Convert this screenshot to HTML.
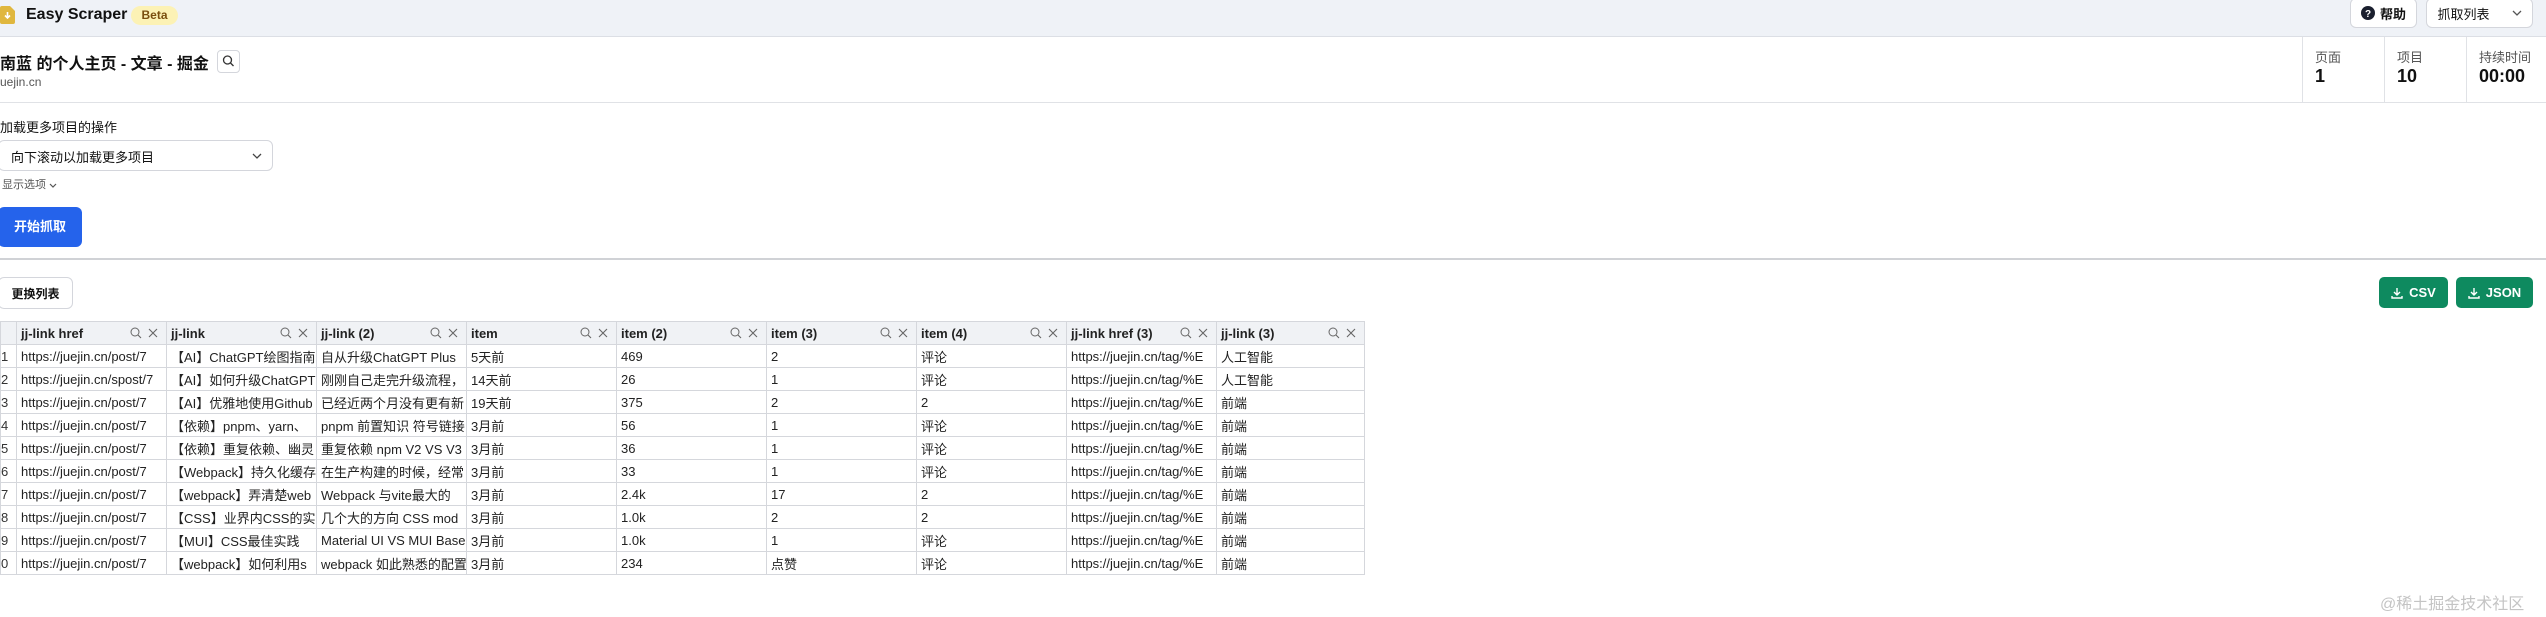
<!DOCTYPE html>
<html><head><meta charset="utf-8"><style>
*{box-sizing:border-box;margin:0;padding:0}
body{width:2546px;height:617px;background:#fff;font-family:"Liberation Sans","Noto Sans CJK SC",sans-serif;color:#111;position:relative;overflow:hidden}
.abs{position:absolute}
.hdr{left:0;top:0;width:2546px;height:37px;background:#eff2f7;border-bottom:1px solid #dcdfe5}
.btn{position:absolute;border:1px solid #d4d6dc;border-radius:6px;background:#fff;font-size:13px;display:flex;align-items:center;justify-content:center}
table{position:absolute;left:0;top:321px;width:1364px;border-collapse:collapse;font-size:13px;table-layout:fixed}
td,th{border:1px solid #d5d7dc;height:23px;padding:0 4px;white-space:nowrap;overflow:hidden;text-align:left;font-weight:normal;color:#222}
th{background:#f0f2f5;font-weight:bold;position:relative;padding-right:40px}
th svg{position:absolute;right:6px;top:5px}
td.i{padding:0;color:#333}
.g{background:#0e8a5f;color:#fff;border-radius:5px;font-weight:bold;font-size:13px;display:flex;align-items:center;justify-content:center;gap:6px}
</style></head><body>
<div class="abs hdr"></div>
<svg class="abs" style="left:0;top:6px" width="15" height="18"><path d="M0 2Q0 0 2 0H10L15 5V16Q15 18 13 18H2Q0 18 0 16Z" fill="#e0b73e"/><path d="M7.5 6V12M5 9.5L7.5 12L10 9.5" stroke="#fff" stroke-width="1.6" fill="none"/></svg>
<div class="abs" style="left:26px;top:6px;font-size:16px;font-weight:bold">Easy Scraper</div>
<div class="abs" style="left:131px;top:6px;width:47px;height:19px;border-radius:10px;background:#fcf2b5;color:#7a4f0f;font-size:12px;font-weight:bold;text-align:center;line-height:19px">Beta</div>
<div class="btn" style="left:2350px;top:-2px;width:67px;height:30px;gap:5px;font-weight:bold"><svg width="14" height="14"><circle cx="7" cy="7" r="7" fill="#1a1f2e"/><text x="7" y="11" font-size="10" font-weight="bold" fill="#fff" text-anchor="middle" font-family="Liberation Sans">?</text></svg>帮助</div>
<div class="btn" style="left:2426px;top:-2px;width:107px;height:30px;gap:22px">抓取列表<svg width="10" height="6"><path d="M1 1L5 5L9 1" stroke="#555" stroke-width="1.3" fill="none"/></svg></div>

<div class="abs" style="left:0;top:50px;font-size:16px;font-weight:bold">南蓝 的个人主页 - 文章 - 掘金</div>
<div class="abs" style="left:217px;top:50px;width:23px;height:23px;border:1px solid #d4d6dc;border-radius:4px"><svg width="21" height="21"><circle cx="9.5" cy="9" r="4" stroke="#333" stroke-width="1.3" fill="none"/><path d="M12.5 12L15.5 15" stroke="#333" stroke-width="1.3"/></svg></div>
<div class="abs" style="left:0;top:75px;font-size:12px;color:#555">uejin.cn</div>
<div class="abs" style="left:0;top:102px;width:2546px;border-top:1px solid #e0e2e6"></div>
<div class="abs" style="left:2302px;top:37px;height:65px;border-left:1px solid #e0e2e6"></div>
<div class="abs" style="left:2384px;top:37px;height:65px;border-left:1px solid #e0e2e6"></div>
<div class="abs" style="left:2466px;top:37px;height:65px;border-left:1px solid #e0e2e6"></div>
<div class="abs" style="left:2315px;top:47px;font-size:13px;color:#555">页面</div>
<div class="abs" style="left:2315px;top:66px;font-size:18px;font-weight:bold">1</div>
<div class="abs" style="left:2397px;top:47px;font-size:13px;color:#555">项目</div>
<div class="abs" style="left:2397px;top:66px;font-size:18px;font-weight:bold">10</div>
<div class="abs" style="left:2479px;top:47px;font-size:13px;color:#555">持续时间</div>
<div class="abs" style="left:2479px;top:66px;font-size:18px;font-weight:bold">00:00</div>

<div class="abs" style="left:0;top:117px;font-size:13px">加载更多项目的操作</div>
<div class="abs" style="left:-2px;top:140px;width:275px;height:31px;border:1px solid #d4d6dc;border-radius:6px;font-size:13px;padding:6px 0 0 12px">向下滚动以加载更多项目<svg style="position:absolute;right:10px;top:12px" width="10" height="6"><path d="M1 1L5 5L9 1" stroke="#444" stroke-width="1.3" fill="none"/></svg></div>
<div class="abs" style="left:2px;top:176px;font-size:11px;color:#555">显示选项 <svg width="8" height="5"><path d="M1 1L4 4L7 1" stroke="#555" stroke-width="1.2" fill="none"/></svg></div>
<div class="abs" style="left:-2px;top:207px;width:84px;height:40px;background:#2563eb;border-radius:6px;color:#fff;font-weight:bold;font-size:13px;text-align:center;line-height:40px">开始抓取</div>
<div class="abs" style="left:0;top:258px;width:2546px;border-top:2px solid #d0d2d6"></div>

<div class="btn" style="left:-2px;top:277px;width:75px;height:32px;font-weight:bold;font-size:12px">更换列表</div>
<div class="abs g" style="left:2379px;top:277px;width:69px;height:31px"><svg width="12" height="12"><path d="M6 1V8M3 5L6 8L9 5M1 9V11H11V9" stroke="#fff" stroke-width="1.4" fill="none"/></svg>CSV</div>
<div class="abs g" style="left:2456px;top:277px;width:77px;height:31px"><svg width="12" height="12"><path d="M6 1V8M3 5L6 8L9 5M1 9V11H11V9" stroke="#fff" stroke-width="1.4" fill="none"/></svg>JSON</div>

<table>
<colgroup><col style="width:16px"><col style="width:150px"><col style="width:150px"><col style="width:150px"><col style="width:150px"><col style="width:150px"><col style="width:150px"><col style="width:150px"><col style="width:150px"><col style="width:148px"></colgroup>
<tr><th style="padding:0"></th>
<th>jj-link href<svg width="30" height="13"><circle cx="5" cy="5" r="4" stroke="#666" fill="none"/><path d="M8 8L11 11M19 2L27 10M27 2L19 10" stroke="#666" stroke-width="1.1"/></svg></th>
<th>jj-link<svg width="30" height="13"><circle cx="5" cy="5" r="4" stroke="#666" fill="none"/><path d="M8 8L11 11M19 2L27 10M27 2L19 10" stroke="#666" stroke-width="1.1"/></svg></th>
<th>jj-link (2)<svg width="30" height="13"><circle cx="5" cy="5" r="4" stroke="#666" fill="none"/><path d="M8 8L11 11M19 2L27 10M27 2L19 10" stroke="#666" stroke-width="1.1"/></svg></th>
<th>item<svg width="30" height="13"><circle cx="5" cy="5" r="4" stroke="#666" fill="none"/><path d="M8 8L11 11M19 2L27 10M27 2L19 10" stroke="#666" stroke-width="1.1"/></svg></th>
<th>item (2)<svg width="30" height="13"><circle cx="5" cy="5" r="4" stroke="#666" fill="none"/><path d="M8 8L11 11M19 2L27 10M27 2L19 10" stroke="#666" stroke-width="1.1"/></svg></th>
<th>item (3)<svg width="30" height="13"><circle cx="5" cy="5" r="4" stroke="#666" fill="none"/><path d="M8 8L11 11M19 2L27 10M27 2L19 10" stroke="#666" stroke-width="1.1"/></svg></th>
<th>item (4)<svg width="30" height="13"><circle cx="5" cy="5" r="4" stroke="#666" fill="none"/><path d="M8 8L11 11M19 2L27 10M27 2L19 10" stroke="#666" stroke-width="1.1"/></svg></th>
<th>jj-link href (3)<svg width="30" height="13"><circle cx="5" cy="5" r="4" stroke="#666" fill="none"/><path d="M8 8L11 11M19 2L27 10M27 2L19 10" stroke="#666" stroke-width="1.1"/></svg></th>
<th>jj-link (3)<svg width="30" height="13"><circle cx="5" cy="5" r="4" stroke="#666" fill="none"/><path d="M8 8L11 11M19 2L27 10M27 2L19 10" stroke="#666" stroke-width="1.1"/></svg></th></tr>
<tr><td class="i">1</td><td>https://juejin.cn/post/7</td><td>【AI】ChatGPT绘图指南</td><td>自从升级ChatGPT Plus</td><td>5天前</td><td>469</td><td>2</td><td>评论</td><td>https://juejin.cn/tag/%E</td><td>人工智能</td></tr>
<tr><td class="i">2</td><td>https://juejin.cn/spost/7</td><td>【AI】如何升级ChatGPT</td><td>刚刚自己走完升级流程，</td><td>14天前</td><td>26</td><td>1</td><td>评论</td><td>https://juejin.cn/tag/%E</td><td>人工智能</td></tr>
<tr><td class="i">3</td><td>https://juejin.cn/post/7</td><td>【AI】优雅地使用Github</td><td>已经近两个月没有更有新</td><td>19天前</td><td>375</td><td>2</td><td>2</td><td>https://juejin.cn/tag/%E</td><td>前端</td></tr>
<tr><td class="i">4</td><td>https://juejin.cn/post/7</td><td>【依赖】pnpm、yarn、</td><td>pnpm 前置知识 符号链接</td><td>3月前</td><td>56</td><td>1</td><td>评论</td><td>https://juejin.cn/tag/%E</td><td>前端</td></tr>
<tr><td class="i">5</td><td>https://juejin.cn/post/7</td><td>【依赖】重复依赖、幽灵</td><td>重复依赖 npm V2 VS V3</td><td>3月前</td><td>36</td><td>1</td><td>评论</td><td>https://juejin.cn/tag/%E</td><td>前端</td></tr>
<tr><td class="i">6</td><td>https://juejin.cn/post/7</td><td>【Webpack】持久化缓存</td><td>在生产构建的时候，经常</td><td>3月前</td><td>33</td><td>1</td><td>评论</td><td>https://juejin.cn/tag/%E</td><td>前端</td></tr>
<tr><td class="i">7</td><td>https://juejin.cn/post/7</td><td>【webpack】弄清楚web</td><td>Webpack 与vite最大的</td><td>3月前</td><td>2.4k</td><td>17</td><td>2</td><td>https://juejin.cn/tag/%E</td><td>前端</td></tr>
<tr><td class="i">8</td><td>https://juejin.cn/post/7</td><td>【CSS】业界内CSS的实</td><td>几个大的方向 CSS mod</td><td>3月前</td><td>1.0k</td><td>2</td><td>2</td><td>https://juejin.cn/tag/%E</td><td>前端</td></tr>
<tr><td class="i">9</td><td>https://juejin.cn/post/7</td><td>【MUI】CSS最佳实践</td><td>Material UI VS MUI Base</td><td>3月前</td><td>1.0k</td><td>1</td><td>评论</td><td>https://juejin.cn/tag/%E</td><td>前端</td></tr>
<tr><td class="i">0</td><td>https://juejin.cn/post/7</td><td>【webpack】如何利用s</td><td>webpack 如此熟悉的配置</td><td>3月前</td><td>234</td><td>点赞</td><td>评论</td><td>https://juejin.cn/tag/%E</td><td>前端</td></tr>
</table>
<div class="abs" style="left:2380px;top:590px;font-size:16px;color:#c4c4c4">@稀土掘金技术社区</div>
</body></html>
